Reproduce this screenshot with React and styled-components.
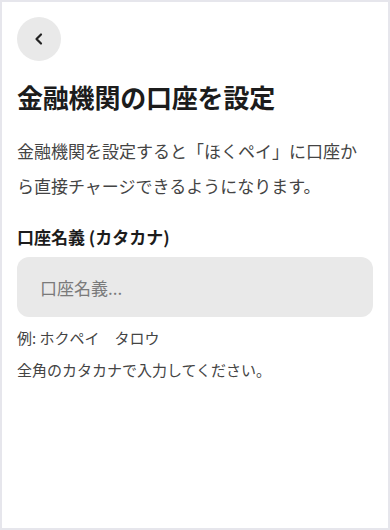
import React from "react";
import styled, { createGlobalStyle } from "styled-components";

const GlobalStyle = createGlobalStyle`
  html, body { margin: 0; padding: 0; background: #fff; }
  body { font-family: "Noto Sans CJK JP", "Noto Sans", sans-serif; }
  * { box-sizing: border-box; }
`;

const Frame = styled.div`
  width: 390px;
  height: 530px;
  border: 2px solid #e6e6ec;
  background: #ffffff;
  padding: 15px;
  display: flex;
  flex-direction: column;
`;

const BackButton = styled.button`
  width: 44px;
  height: 44px;
  border-radius: 50%;
  border: none;
  background: #e9e9e9;
  display: flex;
  align-items: center;
  justify-content: center;
  padding: 0;
  cursor: pointer;
  color: #222;
`;

const Title = styled.h1`
  margin: 18px 0 0;
  font-size: 26px;
  line-height: 36px;
  font-weight: 700;
  color: #1c1c1c;
  letter-spacing: -0.2px;
`;

const Description = styled.p`
  margin: 18px 0 0;
  font-size: 17px;
  line-height: 35px;
  color: #444;
`;

const Field = styled.div`
  margin-top: 22px;
  display: flex;
  flex-direction: column;
`;

const Label = styled.label`
  font-size: 17px;
  line-height: 24px;
  font-weight: 700;
  color: #1c1c1c;
`;

const Input = styled.input`
  margin-top: 8px;
  height: 60px;
  width: 100%;
  border: none;
  border-radius: 12px;
  background: #e9e9e9;
  padding: 0 23px;
  font-family: inherit;
  font-size: 17px;
  color: #222;
  outline: none;
  &::placeholder { color: #7a7a7a; }
`;

const Hints = styled.div`
  margin-top: 10px;
  display: flex;
  flex-direction: column;
  gap: 10px;
`;

const Hint = styled.p`
  margin: 0;
  font-size: 15px;
  line-height: 22px;
  color: #444;
`;

export default function App() {
  return (
    <>
      <GlobalStyle />
      <Frame>
        <div>
          <BackButton aria-label="戻る">
            <svg width="12" height="14" viewBox="0 0 12 14" fill="none">
              <polyline points="8,2.5 3.5,7 8,11.5" stroke="#222" strokeWidth="2.2" strokeLinecap="round" strokeLinejoin="round" />
            </svg>
          </BackButton>
        </div>
        <Title>金融機関の口座を設定</Title>
        <Description>金融機関を設定すると「ほくペイ」に口座から直接チャージできるようになります。</Description>
        <Field>
          <Label htmlFor="name">口座名義 (カタカナ)</Label>
          <Input id="name" placeholder="口座名義..." />
          <Hints>
            <Hint>例: ホクペイ　タロウ</Hint>
            <Hint>全角のカタカナで入力してください。</Hint>
          </Hints>
        </Field>
      </Frame>
    </>
  );
}
